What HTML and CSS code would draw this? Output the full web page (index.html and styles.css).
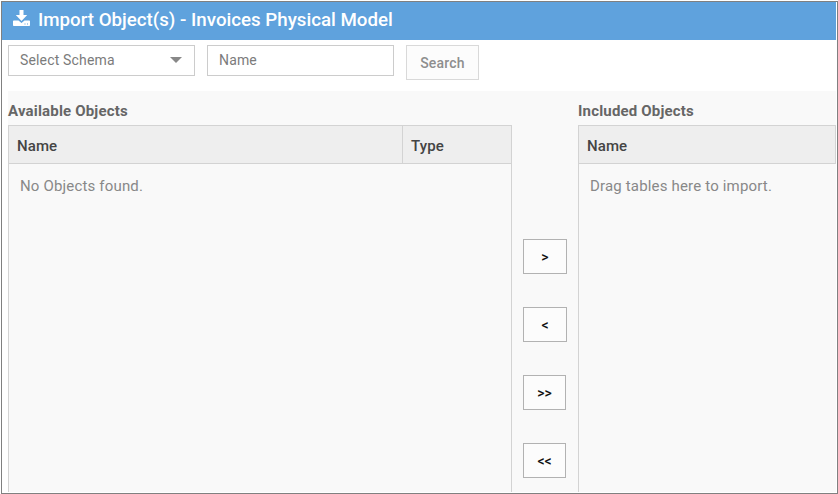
FILE: index.html
```html
<!DOCTYPE html>
<html lang="en">
<head>
<meta charset="utf-8">
<title>Import Object(s)</title>
<link rel="stylesheet" href="styles.css">
</head>
<body>
<div class="dialog">
  <header class="titlebar">
    <svg class="icon" width="18" height="17" viewBox="0 0 18 17">
      <path fill="#fff" fill-rule="evenodd" d="M6.500 0h4v5h3.700L8.500 11 2.800 5.000h3.700zM0.800 10.500h4.700l3 2.500 3-2.500h4.700q.8 0 .8.800v3.900q0 .8-.8.800H.8q-.8 0-.8-.8v-3.900q0-.8.800-.8zM11.500 13.500v1h1v-1zM14 13.500v1h1v-1z"/>
    </svg>
    <h1><span>Import Object(s) - Invoices Physical Model</span></h1>
  </header>
  <div class="filters">
    <div class="field"><span>Select Schema</span><i class="caret"></i></div>
    <div class="field"><span>Name</span></div>
    <button class="search"><span>Search</span></button>
  </div>
  <main class="content">
    <section class="available">
      <h2><span>Available Objects</span></h2>
      <div class="list">
        <div class="head"><b class="name"><span>Name</span></b><b class="type"><span>Type</span></b></div>
        <p><span>No Objects found.</span></p>
      </div>
    </section>
    <div class="moves">
      <button>&gt;</button>
      <button>&lt;</button>
      <button class="all">&gt;&gt;</button>
      <button class="all">&lt;&lt;</button>
    </div>
    <section class="included">
      <h2><span>Included Objects</span></h2>
      <div class="list">
        <div class="head"><b class="name"><span>Name</span></b></div>
        <p><span>Drag tables here to import.</span></p>
      </div>
    </section>
  </main>
</div>
</body>
</html>
```
FILE: styles.css
```css
* { box-sizing: border-box; }
body {
  margin: 0;
  padding: 1px 0 0 1px;
  height: 494px;
  overflow: hidden;
  background: #fff;
  font-family: Roboto, sans-serif;
}
h1, h2, p { margin: 0; }
button { font-family: inherit; padding: 0; border-radius: 0; }
.dialog {
  display: flex;
  flex-direction: column;
  width: 837px;
  height: 493px;
  border: 1px solid #808080;
  padding: 0 1px 1px 0;
}
.titlebar {
  display: flex;
  flex: none;
  height: 38px;
  padding-left: 11px;
  background: #5fa2dd;
  color: #fff;
}
.icon { margin-top: 8px; }
h1 {
  margin-left: 7px;
  font-size: 18.72px;
  font-weight: 500;
  line-height: 37px;
}
.filters {
  display: flex;
  flex: none;
  align-items: flex-start;
  gap: 12px;
  height: 51px;
  padding: 5px 6px 0;
}
.field {
  display: flex;
  justify-content: space-between;
  width: 187px;
  height: 31px;
  padding: 0 12px 0 11px;
  border: 1px solid #ccc;
  color: #7b7b7b;
  font-size: 14px;
  line-height: 29px;
  letter-spacing: .16px;
}
.caret {
  width: 12px;
  height: 6px;
  margin-top: 11px;
  background: #888;
  clip-path: polygon(0 0, 100% 0, 50% 100%);
}
.search {
  width: 73px;
  height: 35px;
  border: 1px solid #d9d9d9;
  background: #fcfcfc;
  color: #8e8e8e;
  font-size: 14px;
  font-weight: 500;
  letter-spacing: .2px;
}
.content {
  display: flex;
  flex: 1;
  min-height: 0;
  margin-left: 6px;
  background: #f9f9f9;
}
.available, .included { display: flex; flex-direction: column; }
.available { width: 504px; }
.included { flex: 1; }
h2 {
  height: 34px;
  color: #666;
  font-size: 15px;
  font-weight: 700;
  line-height: 40px;
  letter-spacing: .18px;
}
.list { flex: 1; border-left: 1px solid #d3d3d3; }
.available .list { border-right: 1px solid #d3d3d3; }
.head {
  display: flex;
  height: 39px;
  border-top: 1px solid #d3d3d3;
  border-bottom: 1px solid #d3d3d3;
  background: #eee;
  color: #444;
  font-size: 15px;
  line-height: 41px;
}
.included .head { border-right: 1px solid #d3d3d3; }
.head b { padding-left: 8px; font-weight: 500; letter-spacing: .1px; }
.name { flex: 1; }
.type { width: 109px; border-left: 1px solid #d3d3d3; }
.list p {
  padding-left: 11px;
  color: #888;
  font-size: 15px;
  line-height: 44px;
  letter-spacing: .17px;
}
.moves {
  display: flex;
  flex-direction: column;
  gap: 33px;
  width: 66px;
  padding: 148px 0 0 11px;
}
.moves button {
  flex: none;
  width: 44px;
  height: 35px;
  border: 1px solid #b2b2b2;
  background: #fcfcfc;
  color: #111;
  font-size: 14px;
  font-weight: 500;
}
.moves .all { width: 43px; }
```
